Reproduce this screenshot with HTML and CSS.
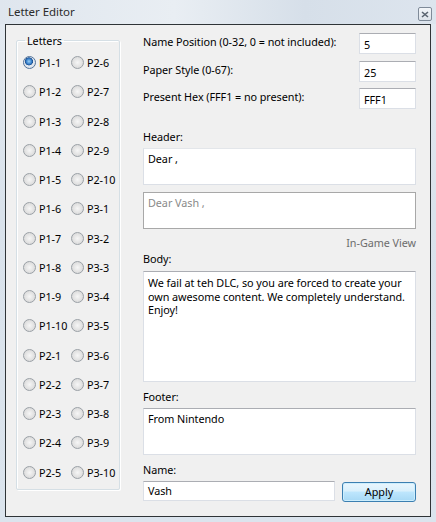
FILE: index.html
```html
<!DOCTYPE html>
<html>
<head>
<meta charset="utf-8">
<link rel="stylesheet" href="styles.css">
</head>
<body>
<div class="window">
  <div class="titlebar">
    <span class="title">Letter Editor</span>
    <span class="close"><svg width="8" height="7" viewBox="0 0 8 7"><path d="M1 1 L7 6 M7 1 L1 6" stroke="#5a6470" stroke-width="1.6"/></svg></span>
  </div>
  <div class="client">
    <fieldset class="group">
      <legend>Letters</legend>
      <div class="radios">
        <label class="radio checked"><span class="dot"></span>P1-1</label>
        <label class="radio"><span class="dot"></span>P2-6</label>
        <label class="radio"><span class="dot"></span>P1-2</label>
        <label class="radio"><span class="dot"></span>P2-7</label>
        <label class="radio"><span class="dot"></span>P1-3</label>
        <label class="radio"><span class="dot"></span>P2-8</label>
        <label class="radio"><span class="dot"></span>P1-4</label>
        <label class="radio"><span class="dot"></span>P2-9</label>
        <label class="radio"><span class="dot"></span>P1-5</label>
        <label class="radio"><span class="dot"></span>P2-10</label>
        <label class="radio"><span class="dot"></span>P1-6</label>
        <label class="radio"><span class="dot"></span>P3-1</label>
        <label class="radio"><span class="dot"></span>P1-7</label>
        <label class="radio"><span class="dot"></span>P3-2</label>
        <label class="radio"><span class="dot"></span>P1-8</label>
        <label class="radio"><span class="dot"></span>P3-3</label>
        <label class="radio"><span class="dot"></span>P1-9</label>
        <label class="radio"><span class="dot"></span>P3-4</label>
        <label class="radio"><span class="dot"></span>P1-10</label>
        <label class="radio"><span class="dot"></span>P3-5</label>
        <label class="radio"><span class="dot"></span>P2-1</label>
        <label class="radio"><span class="dot"></span>P3-6</label>
        <label class="radio"><span class="dot"></span>P2-2</label>
        <label class="radio"><span class="dot"></span>P3-7</label>
        <label class="radio"><span class="dot"></span>P2-3</label>
        <label class="radio"><span class="dot"></span>P3-8</label>
        <label class="radio"><span class="dot"></span>P2-4</label>
        <label class="radio"><span class="dot"></span>P3-9</label>
        <label class="radio"><span class="dot"></span>P2-5</label>
        <label class="radio"><span class="dot"></span>P3-10</label>
      </div>
    </fieldset>
    <div class="form">
      <div class="row first">
        <span class="lbl">Name Position (0-32, 0 = not included):</span>
        <div class="input small">5</div>
      </div>
      <div class="row second">
        <span class="lbl">Paper Style (0-67):</span>
        <div class="input small">25</div>
      </div>
      <div class="row third">
        <span class="lbl">Present Hex (FFF1 = no present):</span>
        <div class="input small">FFF1</div>
      </div>
      <div class="lbl header-lbl">Header:</div>
      <div class="input area header">Dear ,</div>
      <div class="input area preview">Dear Vash ,</div>
      <div class="ingame">In-Game View</div>
      <div class="lbl body-lbl">Body:</div>
      <div class="input area body-box">We fail at teh DLC, so you are forced to create your own awesome content. We completely understand. Enjoy!</div>
      <div class="lbl footer-lbl">Footer:</div>
      <div class="input area footer">From Nintendo</div>
      <div class="lbl name-lbl">Name:</div>
      <div class="bottom">
        <div class="input name">Vash</div>
        <button class="apply">Apply</button>
      </div>
    </div>
  </div>
</div>
</body>
</html>
```
FILE: styles.css
```css
* { box-sizing: border-box; }
html, body { margin: 0; padding: 0; }
body {
  font-family: "Noto Sans", "DejaVu Sans", sans-serif;
  font-size: 10.8px;
  letter-spacing: -0.05px;
  color: #000;
  background: #dbe4ed;
}
.window {
  width: 436px;
  height: 522px;
  background: linear-gradient(180deg, #e4eaf1 0%, #d9e2eb 40%, #dbe4ed 100%);
  display: flex;
  flex-direction: column;
}
.titlebar {
  height: 24px;
  display: flex;
  align-items: center;
  justify-content: space-between;
  padding: 0 4px 0 8px;
  background: linear-gradient(90deg, #dfe6ee 0%, #e9eef3 40%, #d6dfe9 70%, #dde5ee 100%);
}
.title {
  font-size: 11.5px;
  color: #2b2b2b;
  margin-top: -1px;
}
.close {
  width: 14px;
  height: 14px;
  margin-top: 4px;
  border: 1px solid #7f8b99;
  border-radius: 2px;
  background: linear-gradient(#f3f6f9, #dde3ea);
  display: flex;
  align-items: center;
  justify-content: center;
}
.client {
  flex: 1;
  margin: 0 5px 5px 5px;
  border: 1px solid #2f3437;
  background: #f0f0f0;
  display: flex;
  align-items: flex-start;
}
.group {
  margin: 8px 0 0 10px;
  padding: 6px 0 0 6px;
  width: 104px;
  height: 457px;
  border: 1px solid #d5dfe5;
  box-shadow: inset 1px 1px 0 #fff, 1px 1px 0 #fff;
  border-radius: 2px;
  min-width: 0;
}
.group legend {
  padding: 0 2px;
  margin-left: 2px;
  line-height: 15px;
}
.radios {
  display: grid;
  grid-template-columns: 48px 46px;
  grid-auto-rows: 29.25px;
}
.radio {
  display: flex;
  align-items: center;
  height: 17px;
  white-space: nowrap;
}
.dot {
  width: 13px;
  height: 13px;
  border-radius: 50%;
  border: 1px solid #9aa0a6;
  background: radial-gradient(circle at 50% 50%, #f6f6f6 0%, #e2e2e2 55%, #d2d2d2 100%);
  margin-right: 3px;
  flex: none;
}
.checked .dot {
  border-color: #53739a;
  background: radial-gradient(circle at 45% 40%, #9ad0f5 0%, #2f78c6 32%, #1e4f8c 42%, #e3e9f0 48%, #d8dde3 100%);
}
.form {
  margin-left: 23px;
  width: 273px;
  display: flex;
  flex-direction: column;
}
.lbl { line-height: 15px; height: 15px; }
.row {
  display: flex;
  justify-content: space-between;
  align-items: flex-start;
  height: 21px;
}
.row .lbl { padding-top: 1px; }
.first { margin-top: 8px; }
.second { margin-top: 7px; }
.third { margin-top: 6px; }
.input {
  background: #fff;
  border: 1px solid #dbdfe6;
  border-top-color: #abadb3;
  padding: 3px 4px;
  line-height: 14px;
}
.small { width: 57px; height: 21px; padding-top: 4px; }
.header-lbl { margin-top: 20px; }
.area { width: 273px; }
.header { margin-top: 4px; height: 37px; border-top-color: #e3e6ea; }
.preview {
  margin-top: 7px;
  height: 37px;
  border: 1px solid #a8a8a8;
  color: #8a8a8a;
}
.ingame {
  margin-top: 6px;
  text-align: right;
  color: #6d6d6d;
  line-height: 15px;
  height: 15px;
}
.body-lbl { margin-top: 1px; }
.body-box { margin-top: 5px; height: 111px; padding-top: 4px; line-height: 13.5px; }
.footer-lbl { margin-top: 7px; }
.footer { margin-top: 4px; height: 47px; }
.name-lbl { margin-top: 7px; }
.bottom {
  margin-top: 4px;
  display: flex;
  justify-content: space-between;
  align-items: flex-start;
}
.name { width: 192px; height: 20px; padding-top: 2px; }
.apply {
  width: 74px;
  height: 20px;
  margin-top: 1px;
  font: inherit;
  color: #000;
  border: 1px solid #3c7fb1;
  border-radius: 3px;
  background: linear-gradient(180deg, #eaf6fd 0%, #d9f0fc 45%, #bee6fd 50%, #a7d9f5 100%);
  box-shadow: inset 0 0 0 1px #cdeefd;
  padding: 0;
  line-height: 16px;
}
```
